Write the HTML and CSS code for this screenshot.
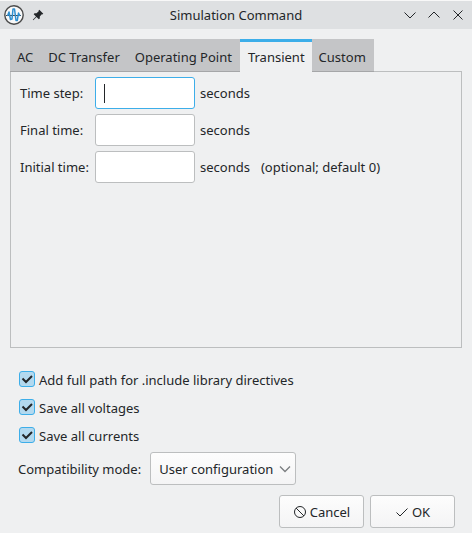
FILE: index.html
```html
<!DOCTYPE html>
<html lang="en">
<head>
<meta charset="utf-8">
<meta name="viewport" content="width=device-width, initial-scale=1">
<title>Simulation Command</title>
<link rel="stylesheet" href="styles.css">
</head>
<body>
<div class="window">
  <header class="titlebar">
    <div class="titlebar-side">
      <svg class="app-icon" viewBox="0 0 20 20" aria-hidden="true">
        <circle cx="10" cy="10" r="9.2" fill="#f8f8f8" stroke="#4a4a4a" stroke-width="1.4"/>
        <path d="M2 10.500H17" stroke="#444" stroke-width="1"/>
        <path d="M3.500 11L5 7L6.500 14.500L8 14L9 4L10.500 4L12 15.500L13.300 15.500L14.500 8L16 11" fill="none" stroke="#2f8fd0" stroke-width="1.500" stroke-linejoin="round"/>
      </svg>
      <button class="title-button" type="button" aria-label="Keep on all desktops">
        <svg class="pin-icon" viewBox="0 0 12 12"><path d="M7.300 .8L11.300 4.800L10.300 5.500L9.800 5.300L7.800 7.500L7.800 9.500L6.800 10.300L4.500 8L1.300 11.200L.8 10.700L4 7.500L1.700 5.200L2.500 4.300L4.500 4.300L6.700 2.300L6.500 1.700Z" fill="#232629"/></svg>
      </button>
    </div>
    <h1 class="title">Simulation Command</h1>
    <div class="titlebar-side titlebar-end">
      <button class="title-button" type="button" aria-label="Minimize"><svg class="window-icon" viewBox="0 0 12 12"><path d="M.5 3.500L6 9L11.500 3.500"/></svg></button>
      <button class="title-button" type="button" aria-label="Maximize"><svg class="window-icon" viewBox="0 0 12 12"><path d="M.5 8.500L6 3L11.500 8.500"/></svg></button>
      <button class="title-button" type="button" aria-label="Close"><svg class="window-icon" viewBox="0 0 12 12"><path d="M1.500 1.500L10.500 10.500M10.500 1.500L1.500 10.500"/></svg></button>
    </div>
  </header>

  <form class="content">
    <div class="tabs" role="tablist">
      <button class="tab" type="button" role="tab">AC</button>
      <button class="tab" type="button" role="tab">DC Transfer</button>
      <button class="tab" type="button" role="tab">Operating Point</button>
      <button class="tab tab-active" type="button" role="tab" aria-selected="true">Transient</button>
      <button class="tab" type="button" role="tab">Custom</button>
    </div>
    <section class="panel" role="tabpanel">
      <div class="fields">
        <label for="step">Time step:</label>
        <input class="field field-focus" id="step" type="text">
        <span>seconds</span><span></span>
        <label for="final">Final time:</label>
        <input class="field" id="final" type="text">
        <span>seconds</span><span></span>
        <label for="initial">Initial time:</label>
        <input class="field" id="initial" type="text">
        <span>seconds</span><span class="hint">(optional; default 0)</span>
      </div>
    </section>

    <div class="options">
      <label class="option"><span class="check"><input class="check-box" type="checkbox" checked><svg class="check-mark" viewBox="0 0 16 16"><path d="M3.500 7.500L7 11L13 5"/></svg></span>Add full path for .include library directives</label>
      <label class="option"><span class="check"><input class="check-box" type="checkbox" checked><svg class="check-mark" viewBox="0 0 16 16"><path d="M3.500 7.500L7 11L13 5"/></svg></span>Save all voltages</label>
      <label class="option"><span class="check"><input class="check-box" type="checkbox" checked><svg class="check-mark" viewBox="0 0 16 16"><path d="M3.500 7.500L7 11L13 5"/></svg></span>Save all currents</label>
    </div>

    <div class="mode">
      <label for="mode">Compatibility mode:</label>
      <span class="select-wrap">
        <select class="select" id="mode"><option>User configuration</option></select>
        <svg class="select-arrow" viewBox="0 0 12 12"><path d="M1 3.500L6 8.500L11 3.500"/></svg>
      </span>
    </div>

    <footer class="actions">
      <button class="button" type="button"><svg class="button-icon" viewBox="0 0 14 14"><circle cx="7" cy="7" r="5.500"/><path d="M3 3L11 11"/></svg>Cancel</button>
      <button class="button" type="submit"><svg class="button-icon" viewBox="0 0 14 14"><path d="M1.500 7.500L5 11L12.500 3.500"/></svg>OK</button>
    </footer>
  </form>
</div>
</body>
</html>
```
FILE: styles.css
```css
* { box-sizing: border-box; }

body {
  margin: 0;
  background: #eff0f1;
  color: #232629;
  font: 13px/18px "Noto Sans", sans-serif;
}

button, input, select { font: inherit; color: inherit; }

svg { display: block; fill: none; stroke: #232629; }

.window {
  min-height: 100vh;
  border-top: 1px solid #f8f8f8;
  background: #eff0f1;
}

.titlebar {
  display: grid;
  grid-template-columns: 1fr auto 1fr;
  align-items: center;
  height: 28px;
  padding: 0 8px 0 4px;
  background: #dee0e2;
}

.titlebar-side { display: flex; align-items: center; gap: 8px; }
.titlebar-end { justify-content: flex-end; gap: 12px; }
.title { margin: 0; padding-left: 4px; font-size: 13px; font-weight: 400; }
.title-button { padding: 0; border: 0; background: none; }
.app-icon { width: 20px; height: 20px; stroke: none; }
.pin-icon { width: 12px; height: 12px; stroke: none; }
.window-icon { width: 12px; height: 12px; }

.content { padding: 10px 10px 5px; }

.tabs { display: flex; }

.tab {
  height: 33px;
  padding: 3px 8px 0 7px;
  border: 0;
  border-bottom: 1px solid #a5a6a8;
  background: #c4c5c7;
  white-space: nowrap;
}

.tab-active {
  padding: 0 7px 0 8px;
  border-top: 3px solid #3daee9;
  border-bottom-color: #eff0f1;
  background: #eff0f1;
  position: relative;
}

.panel {
  height: 277px;
  margin-top: -1px;
  padding: 5px 9px;
  border: 1px solid #bcbebf;
}

.fields {
  display: grid;
  grid-template-columns: 70px 100px auto 1fr;
  grid-auto-rows: 32px;
  align-items: center;
  row-gap: 5px;
  column-gap: 5px;
  white-space: nowrap;
}

.hint { padding-left: 6px; }

.field {
  width: 100%;
  height: 32px;
  padding: 0 8px;
  border: 1px solid #bcbebf;
  border-radius: 3px;
  outline: 0;
  background: #fff;
}

/* Text cursor of the active field */
.field-focus {
  border-color: #3daee9;
  background: linear-gradient(#232629, #232629) 8px 50% / 1px 19px no-repeat #fff;
}

.options {
  display: grid;
  grid-auto-rows: 28px;
  margin: 18px 9px 0;
}

.option { display: flex; align-items: center; gap: 4px; }
.check { display: grid; width: 16px; height: 16px; margin-bottom: 2px; }
.check-box, .check-mark { grid-area: 1 / 1; width: 16px; height: 16px; margin: 0; }

.check-box {
  appearance: none;
  border: 1px solid #3daee9;
  border-radius: 3px;
  background: #b3d9ef;
}

.check-mark { stroke-width: 2; pointer-events: none; visibility: hidden; }
.check-box:checked + .check-mark { visibility: visible; }

.mode {
  display: flex;
  align-items: center;
  gap: 9px;
  margin: 2px 8px 0;
}

.select-wrap { display: grid; align-items: center; }
.select, .select-arrow { grid-area: 1 / 1; }

.select, .button {
  height: 33px;
  border: 1px solid #bcbebf;
  border-radius: 3px;
  background: linear-gradient(#fdfdfd, #f4f4f5);
}

.select { appearance: none; width: 146px; padding: 0 8px; }

.select-arrow {
  justify-self: end;
  width: 12px;
  height: 12px;
  margin-right: 5px;
  stroke: #7b7e80;
  stroke-width: 1.3px;
  pointer-events: none;
}

.actions {
  display: flex;
  justify-content: flex-end;
  gap: 6px;
  margin: 10px 7px 0;
}

.button {
  display: flex;
  align-items: center;
  justify-content: center;
  gap: 3px;
  width: 85px;
  padding: 0;
}

.button-icon { width: 14px; height: 14px; }
```
